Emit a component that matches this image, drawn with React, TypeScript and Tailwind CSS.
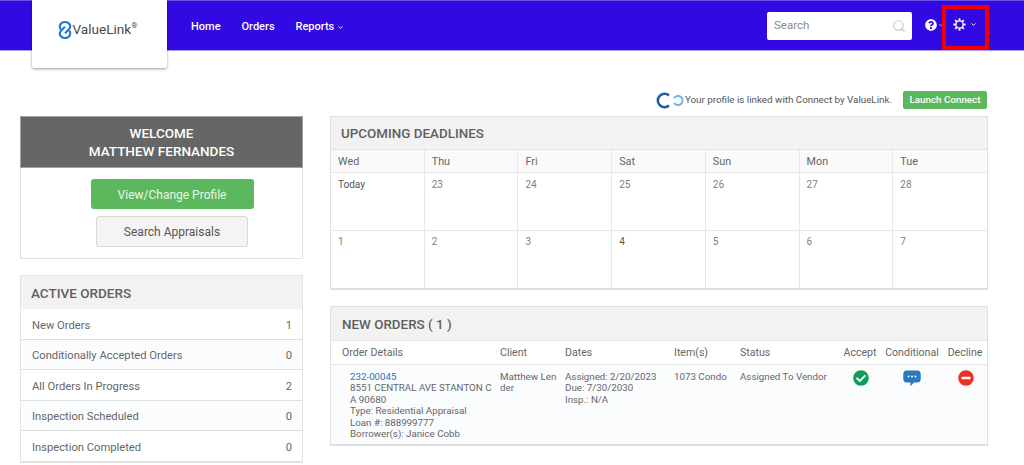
import { ChevronDown, Search } from "lucide-react";
import { FaCheckCircle, FaMinusCircle, FaQuestionCircle } from "react-icons/fa";

const activeOrders = [
  { label: "New Orders", count: 1 },
  { label: "Conditionally Accepted Orders", count: 0 },
  { label: "All Orders In Progress", count: 2 },
  { label: "Inspection Scheduled", count: 0 },
  { label: "Inspection Completed", count: 0 },
];

const days = ["Wed", "Thu", "Fri", "Sat", "Sun", "Mon", "Tue"];
const weeks = [
  ["Today", "23", "24", "25", "26", "27", "28"],
  ["1", "2", "3", "4", "5", "6", "7"],
];

function Logo() {
  return (
    <div className="flex items-center pr-[3px] text-[#4a4a4a]">
      <svg width="14" height="18" viewBox="0 0 13 17" fill="none" stroke="#2179d0" strokeWidth="2">
        <path d="M2.5 8 C0.5 5 2 1 6.5 1 C11 1 12.5 5 10.5 7.5 L6.5 11.5" />
        <path d="M10.5 9 C12.5 12 11 16 6.5 16 C2 16 0.5 12 2.5 9.5 L6.5 5.5" />
      </svg>
      <span className="text-[13.6px] leading-none">ValueLink</span>
      <span className="text-[8px] leading-none self-start mt-px">®</span>
    </div>
  );
}

function ConnectLogo() {
  return (
    <svg width="28" height="17" viewBox="0 0 28 17" fill="none" className="mr-[1px]">
      <path d="M13 3.5 A6.7 6.7 0 1 0 13 13.5" stroke="#1f5f99" strokeWidth="2.6" />
      <path d="M18 6.3 A4.6 4.6 0 1 1 18 10.7" stroke="#6fb2e6" strokeWidth="2" />
    </svg>
  );
}

function Gear() {
  const teeth = [0, 45, 90, 135, 180, 225, 270, 315];
  return (
    <svg width="13" height="13" viewBox="0 0 14 14" fill="none" stroke="white">
      <circle cx="7" cy="7" r="3.9" strokeWidth="1.5" />
      {teeth.map((a) => (
        <line key={a} x1="7" y1="0.4" x2="7" y2="3" strokeWidth="2" transform={`rotate(${a} 7 7)`} />
      ))}
    </svg>
  );
}

function Bubble() {
  return (
    <svg width="18" height="17" viewBox="0 0 18 17" className="mx-auto">
      <path
        d="M4 0.5 H14 A3.6 3.6 0 0 1 17.7 4 V9 A3.6 3.6 0 0 1 14 12.5 H11 L7.6 16.2 L7.4 12.5 H4 A3.6 3.6 0 0 1 0.3 9 V4 A3.6 3.6 0 0 1 4 0.5 Z"
        fill="#2a78bf"
      />
      <circle cx="5.5" cy="6.5" r="1" fill="white" />
      <circle cx="9" cy="6.5" r="1" fill="white" />
      <circle cx="12.5" cy="6.5" r="1" fill="white" />
    </svg>
  );
}

function PanelHeader({ children, className = "" }: { children: React.ReactNode; className?: string }) {
  return (
    <div className={`flex items-center bg-[#f2f2f2] border-b border-[#e4e4e4] text-[#5f5f5f] font-medium ${className}`}>
      {children}
    </div>
  );
}

export default function App() {
  return (
    <div className="h-[465px] w-[1024px] overflow-hidden bg-white font-['Roboto',sans-serif] text-[#666]">
      <header className="relative h-[51px] flex items-center bg-[#3209e3] border-t border-[#6a52e8] border-b border-b-[#a99ce8]">
        <div className="self-start -mt-px ml-[32px] w-[135px] h-[68px] bg-white rounded-b-[2px] shadow-[0_1px_3px_rgba(0,0,0,0.4)] flex items-center justify-center pb-[8px]">
          <Logo />
        </div>
        <nav className="ml-[24px] pt-[4px] flex items-center gap-[21px] text-white text-[11px] font-medium">
          <span>Home</span>
          <span>Orders</span>
          <span className="flex items-center gap-[3px]">
            Reports
            <ChevronDown size={7} strokeWidth={3} />
          </span>
        </nav>
        <div className="ml-auto flex items-center w-[145px] h-[28px] bg-white rounded-[2px] pl-[7px] pr-[6px] pt-px text-[11.5px] text-[#8a8a8a]">
          <span className="flex-1">Search</span>
          <Search size={14} className="text-[#c9c9c9]" />
        </div>
        <div className="ml-[13px] mr-[47px] flex items-center text-white -mt-[2px]">
          <FaQuestionCircle size={12} />
          <ChevronDown size={6} strokeWidth={3} className="ml-px text-[#cfc8f8]" />
          <span className="ml-[9px] flex items-center gap-[4px]">
            <Gear />
            <ChevronDown size={7} strokeWidth={3} />
          </span>
        </div>
        <div className="absolute left-[942px] top-[4px] w-[47px] h-[45px] border-4 border-[#f00000]" />
      </header>

      <main className="flex gap-[27px] pl-[20px]">
        <div className="w-[283px] pt-[65px] shrink-0">
          <section className="border border-[#dde2df]">
            <div className="-m-px mb-0 h-[52px] bg-[#666] border border-[#a0a0a0] text-white text-[13.5px] font-medium leading-[18px] text-center flex flex-col justify-center">
              <div>WELCOME</div>
              <div>MATTHEW FERNANDES</div>
            </div>
            <div className="h-[90px] flex flex-col items-center pt-[11px] pl-[21px] gap-[7px]">
              <button className="w-[163px] h-[30px] pt-px bg-[#5cb85c] rounded-[3px] text-[#eaf7ea] text-[12px]">
                View/Change Profile
              </button>
              <button className="w-[152px] h-[31px] bg-[#f4f4f4] border border-[#d8d8d8] rounded-[3px] text-[#555] text-[12px]">
                Search Appraisals
              </button>
            </div>
          </section>

          <section className="mt-[16px] border border-[#e4e4e4]">
            <PanelHeader className="h-[33px] pl-[10px] pt-[2px] text-[13.5px] border-b-0">ACTIVE ORDERS</PanelHeader>
            {activeOrders.map((o, i) => (
              <div
                key={o.label}
                className={`h-[30.5px] flex items-center justify-between pl-[11px] pr-[10px] pt-[5px] text-[11.2px] border-b border-[#dde2df] ${
                  i % 2 === 1 ? "bg-[#fbfcfe]" : "bg-white"
                }`}
              >
                <span>{o.label}</span>
                <span>{o.count}</span>
              </div>
            ))}
          </section>
        </div>

        <div className="w-[658px] shrink-0">
          <div className="h-[65px] flex items-start justify-end pt-[40px] pr-px">
            <div className="flex items-center h-[18px]">
              <ConnectLogo />
              <span className="text-[9.8px] text-[#555]">Your profile is linked with Connect by ValueLink.</span>
              <button className="ml-[11px] w-[84px] h-[18px] bg-[#5cb85c] rounded-[2px] text-white text-[9.8px] font-medium">
                Launch Connect
              </button>
            </div>
          </div>

          <section className="border border-[#e0e0e0] border-b-2">
            <PanelHeader className="h-[33px] pl-[10px] pt-[2px] text-[13.4px]">UPCOMING DEADLINES</PanelHeader>
            <div className="grid grid-cols-7 text-[10.8px]">
              {days.map((d, i) => (
                <div
                  key={d}
                  className={`h-[23px] pl-[7px] pt-[3px] flex items-center bg-[#fafafa] border-b border-[#e8e8e8] ${
                    i < 6 ? "border-r" : ""
                  }`}
                >
                  {d}
                </div>
              ))}
              {weeks.map((week, w) =>
                week.map((c, i) => (
                  <div
                    key={c}
                    className={`pl-[7px] text-[10px] border-[#e8e8e8] ${i < 6 ? "border-r" : ""} ${
                      w === 0 ? "h-[58px] pt-[4px] border-b" : "h-[57px] pt-[3px]"
                    } ${c === "Today" || c === "4" ? "text-[#555]" : "text-[#808080]"}`}
                  >
                    {c}
                  </div>
                ))
              )}
            </div>
          </section>

          <section className="mt-[16px] border border-[#e0e0e0] border-b-2">
            <PanelHeader className="h-[34px] pl-[11px] pt-[3px] text-[13.4px]">NEW ORDERS ( 1 )</PanelHeader>
            <table className="w-full table-fixed text-[9.75px] leading-[11.6px]">
              <colgroup>
                <col className="w-[164px]" />
                <col className="w-[65px]" />
                <col className="w-[109px]" />
                <col className="w-[66px]" />
                <col className="w-[104px]" />
                <col className="w-[42px]" />
                <col className="w-[62px]" />
                <col />
              </colgroup>
              <thead>
                <tr className="h-[23px] border-b border-[#e4e4e4] text-[10.6px] text-left font-normal">
                  <th className="pl-[11px] pt-[2px] font-normal">Order Details</th>
                  <th className="pl-[5px] pt-[2px] font-normal">Client</th>
                  <th className="pl-[5px] pt-[2px] font-normal">Dates</th>
                  <th className="pl-[5px] pt-[2px] font-normal">Item(s)</th>
                  <th className="pl-[5px] pt-[2px] font-normal">Status</th>
                  <th className="pt-[2px] text-center font-normal">Accept</th>
                  <th className="pt-[2px] text-center font-normal">Conditional</th>
                  <th className="pt-[2px] text-center font-normal">Decline</th>
                </tr>
              </thead>
              <tbody>
                <tr className="h-[80px] align-top bg-[#fbfcfe]">
                  <td className="pl-[19px] pt-[6px] break-all">
                    <div className="text-[#2a73b5]">232-00045</div>
                    <div>8551 CENTRAL AVE STANTON CA 90680</div>
                    <div className="break-normal">Type: Residential Appraisal</div>
                    <div className="break-normal">Loan #: 888999777</div>
                    <div className="break-normal">Borrower(s): Janice Cobb</div>
                  </td>
                  <td className="pl-[5px] pt-[6px] break-all">Matthew Lender</td>
                  <td className="pl-[5px] pt-[6px]">
                    <div>Assigned: 2/20/2023</div>
                    <div>Due: 7/30/2030</div>
                    <div>Insp.: N/A</div>
                  </td>
                  <td className="pl-[5px] pt-[6px]">1073 Condo</td>
                  <td className="pl-[5px] pt-[6px]">Assigned To Vendor</td>
                  <td className="pt-[5px] pl-px">
                    <FaCheckCircle size={16} className="mx-auto text-[#0f9d58]" />
                  </td>
                  <td className="pt-[5px]">
                    <Bubble />
                  </td>
                  <td className="pt-[5px] pl-px">
                    <FaMinusCircle size={16} className="mx-auto text-[#ee3124]" />
                  </td>
                </tr>
              </tbody>
            </table>
          </section>
        </div>
      </main>
    </div>
  );
}
